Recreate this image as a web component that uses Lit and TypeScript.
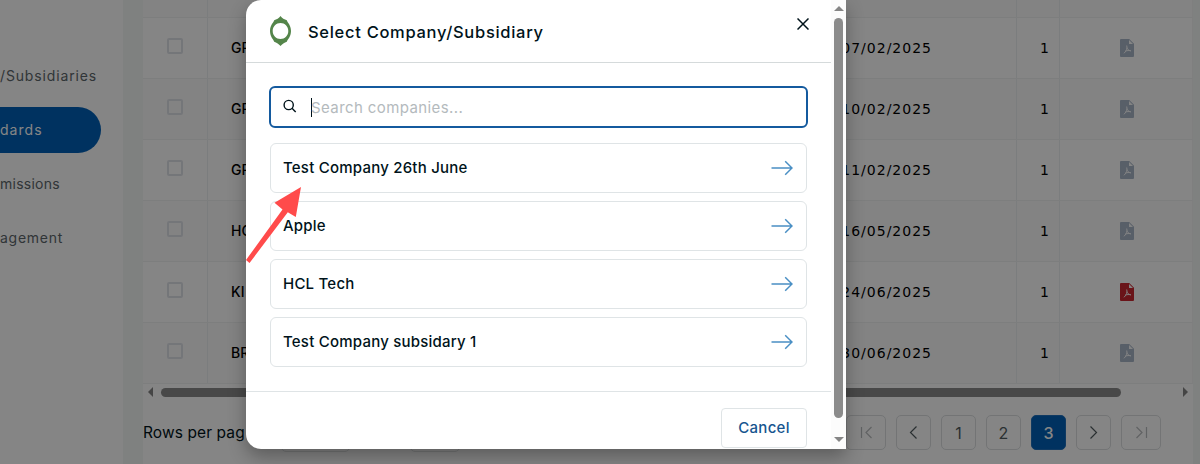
import { LitElement, html, css, svg } from "lit";
import { customElement } from "lit/decorators.js";
import { classMap } from "lit/directives/class-map.js";

const rows = [
  { name: "GR", date: "07/02/2025", count: 1, live: false },
  { name: "GR", date: "10/02/2025", count: 1, live: false },
  { name: "GR", date: "11/02/2025", count: 1, live: false },
  { name: "HC", date: "16/05/2025", count: 1, live: false },
  { name: "KI", date: "24/06/2025", count: 1, live: true },
  { name: "BR", date: "30/06/2025", count: 1, live: false },
];

const companies = ["Test Company 26th June", "Apple", "HCL Tech", "Test Company subsidary 1"];

const pageIcons: Record<string, unknown> = {
  first: svg`<path d="M1.500 1v11M11.500 1L6 6.500l5.500 5.500"/>`,
  prev: svg`<path d="M9.500 .5L3.500 6.500l6 6"/>`,
  next: svg`<path d="M3.500 .5l6 6-6 6"/>`,
  last: svg`<path d="M11.500 1v11M1.500 1L7 6.500 1.500 12"/>`,
};

@customElement("app-root")
export class AppRoot extends LitElement {
  static styles = css`
    :host { display: block; position: relative; width: 1200px; height: 464px; overflow: hidden;
      font-family: Inter, "Liberation Sans", sans-serif; color: #00131a; background: #fff; }
    * { box-sizing: border-box; }
    .page { display: flex; height: 464px; background: #f4f7f6; }
    .side { width: 123px; background: #fff; padding-top: 53px; display: flex; flex-direction: column; gap: 8px;
      align-items: flex-start; font-size: 14px; color: #5d676b; }
    .nav { height: 46px; display: flex; align-items: center; justify-content: flex-start; white-space: nowrap; padding-bottom: 2px; }
    .n0 { letter-spacing: .85px; }
    .n1 { width: 101px; border-radius: 0 23px 23px 0; background: #0060b8; color: #fff; letter-spacing: 1.050px; }
    .n2 { letter-spacing: .25px; }
    .n3 { letter-spacing: .75px; }
    .content { margin-left: 20px; width: 1050px; background: #fff; display: flex; flex-direction: column; }
    .row { display: grid; grid-template-columns: 65px 809px 43px 1fr; height: 61px; border-bottom: 1px solid #eff1f2;
      border-right: 1px solid #f3f4f4; font-size: 14px; font-weight: 500; color: #000; }
    .row.alt { background: #fbfbfb; }
    .row.head { height: 18px; }
    .cell { border-right: 1px solid #ecf0f1; display: flex; align-items: center; padding-bottom: 1px; }
    .cell:last-child { border-right: 0; justify-content: center; padding-left: 2px; }
    .cell.pick { justify-content: center; padding: 0 1px 4px 0; }
    .box { width: 16px; height: 16px; border: 2px solid #dfe2e8; border-radius: 2px; }
    .cell.main { justify-content: space-between; padding: 0 85px 1px 23px; }
    .date, .count { font-family: "DejaVu Sans", sans-serif; font-weight: 400; font-size: 14px; }
    .date { letter-spacing: 1px; margin-right: -1px; }
    .cell.count { justify-content: flex-end; padding-right: 10px; }
    .pdf { width: 14px; height: 18px; margin-top: 1px; fill: #a9b6c8; }
    .pdf.live { fill: #cc2830; }
    .hbar { height: 16px; display: flex; align-items: center; padding: 0 5px; justify-content: space-between; }
    .tri { width: 5px; height: 10px; fill: #858585; }
    .hthumb { width: 960px; height: 9px; border-radius: 5px; background: #8b8b8b; margin-right: 54px; }
    .pager { display: flex; align-items: flex-start; padding: 14px 32px 0 0; }
    .label { width: 138px; line-height: 37px; font-size: 15.500px; letter-spacing: .1px; white-space: nowrap; }
    .select { border: 1px solid #e0e3e5; border-radius: 5px; height: 38px; }
    .s1 { width: 69px; margin-right: 60px; }
    .s2 { width: 50px; }
    .pages { display: flex; gap: 10px; margin-left: auto; }
    .pg { width: 35px; height: 35px; margin-top: 1px; border: 1px solid #dcdfe1; border-radius: 5px; display: flex; align-items: center;
      justify-content: center; font-size: 16px; color: #525c60; }
    .pg.wide { width: 40px; color: #b9bcbe; }
    .pg.on { background: #0060b8; color: #fff; font-weight: 500; border-color: #1f70bd; }
    .pg svg { width: 13px; height: 13px; fill: none; stroke: currentColor; stroke-width: 1.200; }
    .shade { position: absolute; inset: 0; background: rgba(0, 0, 0, .48); }
    .dialog { position: absolute; left: 246px; top: 0; width: 600px; height: 449px; background: #fff; display: flex;
      border-radius: 15px 0 0 15px; box-shadow: 0 8px 18px rgba(0, 0, 0, .3); }
    .body { width: 585px; display: flex; flex-direction: column; }
    .title { height: 63px; border-bottom: 1px solid #d5dadb; display: flex; align-items: center; padding: 0 22px 0 24px;
      font-size: 16.500px; font-weight: 500; letter-spacing: .7px; }
    .title span { margin-top: 1px; }
    .logo { width: 21px; height: 30px; margin-right: 17px; }
    .close { width: 12px; height: 12px; margin: 0 0 14px auto; stroke: #00131a; stroke-width: 1.500; fill: none; }
    .search { margin: 23px 23px 15px; height: 42px; border: 2px solid #145a9e; border-radius: 6px; display: flex; align-items: center;
      padding-left: 12px; font-size: 15px; color: #b4babd; letter-spacing: .4px; }
    .glass { width: 14px; height: 14px; margin: -2px 14px 0 0; fill: none; stroke: #00131a; stroke-width: 1.400; }
    .caret { width: 1px; height: 19px; background: #00131a; margin-right: -1px; }
    .list { display: flex; flex-direction: column; gap: 8px; margin: 0 24px 24px; }
    .item { height: 50px; border: 1px solid #dfe4e6; border-radius: 6px; display: flex; align-items: center;
      justify-content: space-between; padding: 0 13px 0 12px; font-size: 15px; font-weight: 500; letter-spacing: .22px; }
    .item span, .cancel span { margin-top: -2px; }
    .arrow { width: 22px; height: 16px; fill: none; stroke: #4a8fc4; stroke-width: 1.500; }
    .foot { border-top: 1px solid #dfe4e6; padding: 16px 24px 0 0; display: flex; justify-content: flex-end; }
    .cancel { width: 86px; height: 40px; border: 1px solid #dfe4e6; border-radius: 4px; display: flex; align-items: center;
      justify-content: center; color: #17558f; font-size: 15px; font-weight: 500; letter-spacing: .3px; }
    .vbar { width: 15px; background: #fcfcfc; display: flex; flex-direction: column; align-items: center; padding: 6px 0 7px; }
    .vthumb { width: 9px; height: 400px; border-radius: 5px; background: #8b8b8b; margin: 7px 0 19px; }
    .vt { width: 10px; height: 5px; fill: #858585; flex: none; }
    .pointer { position: absolute; left: 246px; top: 186px; width: 57px; height: 78px; fill: #ff4b4b; }
  `;

  render() {
    return html`
      <div class="page">
        <nav class="side">
          <div class="nav n0">/Subsidiaries</div>
          <div class="nav n1">dards</div>
          <div class="nav n2">missions</div>
          <div class="nav n3">agement</div>
        </nav>
        <main class="content">
          <div class="row alt head"><div class="cell"></div><div class="cell"></div><div class="cell"></div><div class="cell"></div></div>
          ${rows.map((r, i) => html`
            <div class=${classMap({ row: true, alt: i % 2 === 1 })}>
              <div class="cell pick"><span class="box"></span></div>
              <div class="cell main"><span>${r.name}</span><span class="date">${r.date}</span></div>
              <div class="cell count">${r.count}</div>
              <div class="cell">
                <svg class=${classMap({ pdf: true, live: r.live })} viewBox="0 0 14 18">
                  <path fill-rule="evenodd" d="M1 0h8.200L14 4.700V17a1 1 0 0 1-1 1H1a1 1 0 0 1-1-1V1a1 1 0 0 1 1-1zM9 1v4h4z"/>
                  <path d="M6.700 6.500c.8 2.500 0 5-2.700 7.800M6.900 8.500c.6 2 1.800 3 3.900 3.300M5.200 12.300c2-.9 3.700-1 5.700-.4" fill="none" stroke="#fff" stroke-width=".9"/>
                </svg>
              </div>
            </div>`)}
          <div class="hbar">
            <svg class="tri" viewBox="0 0 5 10"><path d="M5 0v10L0 5z"/></svg>
            <div class="hthumb"></div>
            <svg class="tri" viewBox="0 0 5 10"><path d="M0 0v10l5-5z"/></svg>
          </div>
          <div class="pager">
            <div class="label">Rows per pag</div>
            <div class="select s1"></div><div class="select s2"></div>
            <div class="pages">
              <div class="pg wide"><svg viewBox="0 0 13 13">${pageIcons.first}</svg></div>
              <div class="pg"><svg viewBox="0 0 13 13">${pageIcons.prev}</svg></div>
              <div class="pg">1</div><div class="pg">2</div><div class="pg on">3</div>
              <div class="pg"><svg viewBox="0 0 13 13">${pageIcons.next}</svg></div>
              <div class="pg wide"><svg viewBox="0 0 13 13">${pageIcons.last}</svg></div>
            </div>
          </div>
        </main>
      </div>
      <div class="shade"></div>
      <section class="dialog">
        <div class="body">
          <div class="title">
            <svg class="logo" viewBox="0 0 21 30">
              <path fill="#54854a" fill-rule="evenodd" d="M10.500 0C12 2 14.500 3.600 16.800 4.300C17.200 6.200 21 9 21 15s-3.800 8.800-4.200 10.700C14.500 26.400 12 28 10.500 30C9 28 6.500 26.400 4.200 25.700C3.800 23.800 0 21 0 15S3.800 6.200 4.200 4.300C6.500 3.600 9 2 10.500 0zM10.500 7C6.200 7 2.700 10.400 2.700 15s3.500 8 7.800 8s7.800-3.400 7.800-8s-3.500-8-7.800-8z"/>
            </svg>
            <span>Select Company/Subsidiary</span>
            <svg class="close" viewBox="0 0 12 12"><path d="M.5.5l11 11M11.500.5l-11 11"/></svg>
          </div>
          <div class="search">
            <svg class="glass" viewBox="0 0 14 14"><circle cx="5.700" cy="6" r="4.600"/><path d="M9 9.300l3.700 3.700"/></svg>
            <span class="caret"></span><span>Search companies...</span>
          </div>
          <div class="list">
            ${companies.map((c) => html`
              <div class="item"><span>${c}</span>
                <svg class="arrow" viewBox="0 0 22 16"><path d="M.5 8H21M14.200 1.300L21 8l-6.800 6.700"/></svg>
              </div>`)}
          </div>
          <div class="foot"><div class="cancel"><span>Cancel</span></div></div>
        </div>
        <div class="vbar">
          <svg class="vt" viewBox="0 0 10 5"><path d="M0 5h10L5 0z"/></svg>
          <div class="vthumb"></div>
          <svg class="vt" viewBox="0 0 10 5"><path d="M0 0h10L5 5z"/></svg>
        </div>
      </section>
      <svg class="pointer" viewBox="0 0 57 78"><path d="M0 74L36.500 23.500 28.500 16.800 55 1 49.800 31 41.800 26.200 3.500 77z"/></svg>
    `;
  }
}
